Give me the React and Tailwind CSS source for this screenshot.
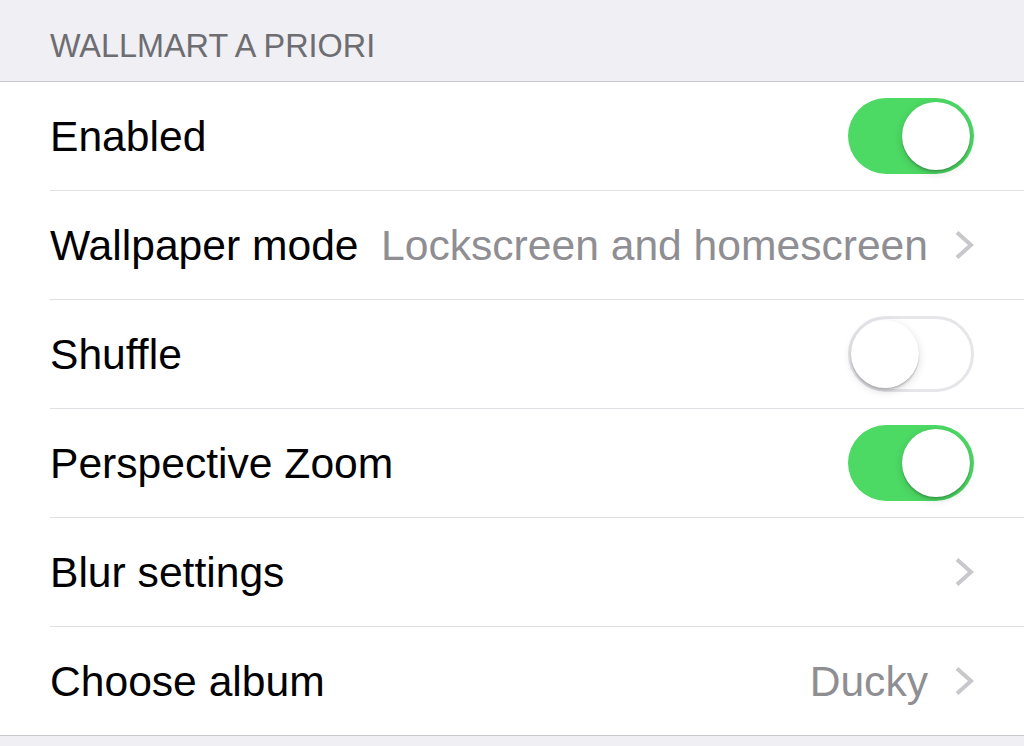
const ROWS = [
  { label: 'Enabled', toggle: true },
  { label: 'Wallpaper mode', value: 'Lockscreen and homescreen', chevron: true },
  { label: 'Shuffle', toggle: false },
  { label: 'Perspective Zoom', toggle: true },
  { label: 'Blur settings', chevron: true },
  { label: 'Choose album', value: 'Ducky', chevron: true },
]

function Switch({ on }) {
  return (
    <div
      className={`relative w-[126px] h-[76px] rounded-full flex items-center ${
        on ? 'bg-[#4cd964] justify-end px-[4px]' : 'bg-white border-[3px] border-[#e5e5ea] justify-start px-0'
      }`}
    >
      <span className="block w-[68px] h-[68px] rounded-full bg-white shadow-[0_3px_8px_rgba(0,0,0,0.15),0_1px_1px_rgba(0,0,0,0.16),0_3px_1px_rgba(0,0,0,0.08)]" />
    </div>
  )
}

function Chevron() {
  return (
    <svg className="w-[20px] h-[30px] shrink-0" viewBox="0 0 20 30" fill="none">
      <path d="M3 2.5 L17 15 L3 27.5" stroke="#c7c7cc" strokeWidth="4" strokeLinecap="butt" strokeLinejoin="miter" />
    </svg>
  )
}

export default function App() {
  return (
    <div className="w-[1024px] h-[746px] bg-[#efeff4] overflow-hidden font-['Liberation_Sans',Arial,sans-serif]">
      {/* Section header */}
      <div className="h-[82px] pt-[28px] pl-[50px] border-b border-[#c8c7cc] text-[32.4px] leading-[37px] text-[#6d6d72]">
        WALLMART A PRIORI
      </div>

      {/* Rows */}
      <div className="bg-white border-b border-[#c8c7cc]">
        {ROWS.map((row, i) => (
          <div key={row.label} className="pl-[50px]">
            <div
              className={`h-[108px] flex items-center pr-[50px] ${
                i < ROWS.length - 1 ? 'border-b border-[#e0e0e4] h-[109px]' : ''
              }`}
            >
              <span className="text-[42.6px] pt-[2px] text-black whitespace-nowrap">{row.label}</span>
              <div className="flex-1" />
              {row.value && (
                <span className="text-[42.6px] pt-[2px] text-[#8e8e93] whitespace-nowrap mr-[26px]">{row.value}</span>
              )}
              {row.chevron && <Chevron />}
              {row.toggle !== undefined && <Switch on={row.toggle} />}
            </div>
          </div>
        ))}
      </div>
    </div>
  )
}
